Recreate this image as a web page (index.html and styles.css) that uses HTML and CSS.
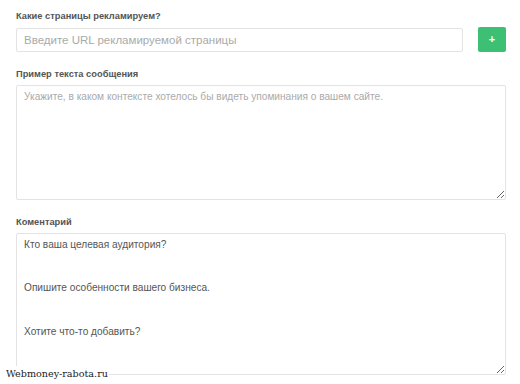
FILE: index.html
```html
<!DOCTYPE html>
<html lang="ru">
<head>
<meta charset="utf-8">
<link rel="stylesheet" href="styles.css">
</head>
<body>
<form class="form">
  <div class="field">
    <label class="label">Какие страницы рекламируем?</label>
    <div class="url-row">
      <input class="input" type="text" placeholder="Введите URL рекламируемой страницы">
      <button class="add-btn" type="button">+</button>
    </div>
  </div>
  <div class="field">
    <label class="label">Пример текста сообщения</label>
    <textarea class="textarea textarea-msg" placeholder="Укажите, в каком контексте хотелось бы видеть упоминания о вашем сайте."></textarea>
  </div>
  <div class="field">
    <label class="label">Коментарий</label>
    <textarea class="textarea textarea-comment">Кто ваша целевая аудитория?

Опишите особенности вашего бизнеса.

Хотите что-то добавить?</textarea>
  </div>
</form>
<div class="watermark">Webmoney-rabota.ru</div>
</body>
</html>
```

FILE: styles.css
```css
html, body {
  margin: 0;
  padding: 0;
  background: #fff;
}
body {
  font-family: "Liberation Sans", Arial, sans-serif;
  position: relative;
  width: 520px;
  height: 384px;
  overflow: hidden;
}
.form {
  display: flex;
  flex-direction: column;
  padding: 10px 14px 0 16px;
  gap: 16px;
}
.field {
  display: flex;
  flex-direction: column;
  gap: 5px;
}
.label {
  font-size: 9.3px;
  font-weight: bold;
  color: #555;
  line-height: 12px;
}
.url-row {
  display: flex;
  align-items: center;
  gap: 15px;
  height: 25px;
}
.input {
  flex: 0 0 447px;
  height: 24px;
  box-sizing: border-box;
  border: 1px solid #e3e3e3;
  border-radius: 2px;
  padding: 0 7px;
  font-family: inherit;
  font-size: 11.5px;
  color: #555;
  outline: none;
}
.input::placeholder,
.textarea::placeholder {
  color: #aaa;
}
.add-btn {
  width: 28px;
  height: 25px;
  border: none;
  border-radius: 2px;
  background: #3dc073;
  color: #fff;
  font-family: inherit;
  font-size: 11px;
  font-weight: bold;
  padding: 0;
  line-height: 25px;
}
.textarea {
  box-sizing: border-box;
  width: 490px;
  border: 1px solid #e3e3e3;
  border-radius: 2px;
  padding: 0 7px;
  font-family: inherit;
  font-size: 10.15px;
  line-height: 21.7px;
  color: #555;
  outline: none;
  resize: vertical;
}
.textarea-msg {
  height: 115px;
}
.textarea-comment {
  height: 142px;
}
.watermark {
  position: absolute;
  left: 5px;
  top: 366px;
  font-family: "DejaVu Serif", serif;
  font-size: 9.6px;
  color: #1a1a1a;
  background: #fff;
  padding: 1px 1px;
  line-height: 13px;
}
```
